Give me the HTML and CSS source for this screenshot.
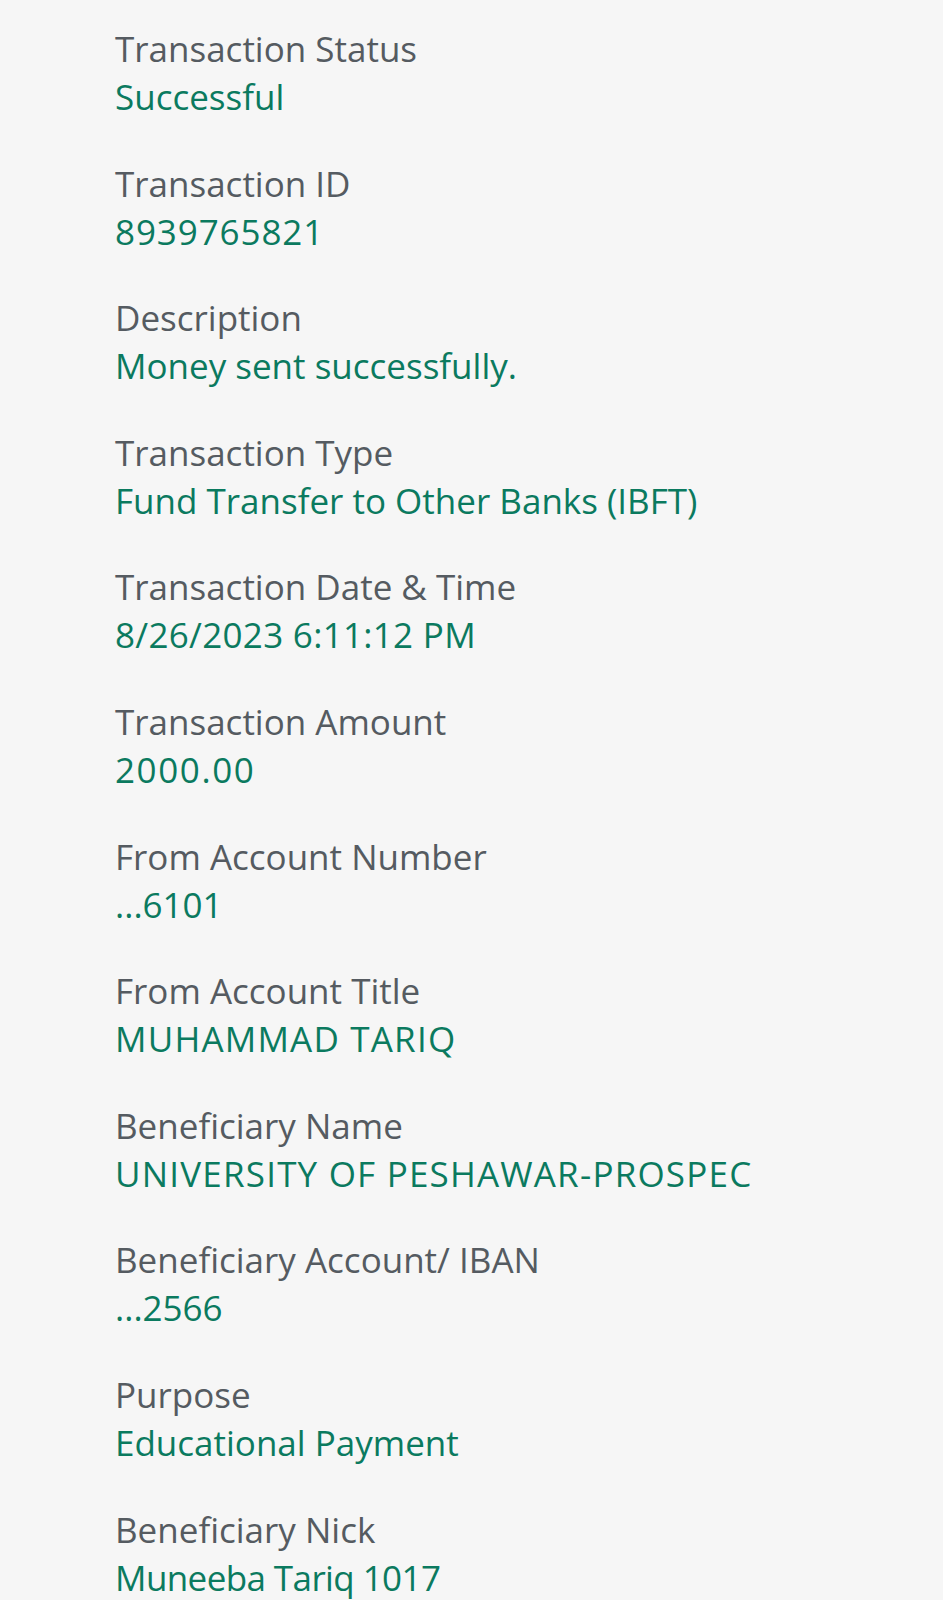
FILE: index.html
```html
<!DOCTYPE html>
<html>
<head>
<meta charset="utf-8">
<link rel="stylesheet" href="styles.css">
</head>
<body>
<div class="list">
  <div class="item"><div class="label">Transaction Status</div><div class="value">Successful</div></div>
  <div class="item"><div class="label">Transaction ID</div><div class="value wide">8939765821</div></div>
  <div class="item"><div class="label">Description</div><div class="value">Money sent successfully.</div></div>
  <div class="item"><div class="label">Transaction Type</div><div class="value">Fund Transfer to Other Banks (IBFT)</div></div>
  <div class="item"><div class="label">Transaction Date &amp; Time</div><div class="value date">8/26/2023 6:11:12 PM</div></div>
  <div class="item"><div class="label">Transaction Amount</div><div class="value amount">2000.00</div></div>
  <div class="item"><div class="label">From Account Number</div><div class="value">...6101</div></div>
  <div class="item"><div class="label">From Account Title</div><div class="value caps">MUHAMMAD TARIQ</div></div>
  <div class="item"><div class="label">Beneficiary Name</div><div class="value caps">UNIVERSITY OF PESHAWAR-PROSPEC</div></div>
  <div class="item"><div class="label">Beneficiary Account/ IBAN</div><div class="value">...2566</div></div>
  <div class="item"><div class="label">Purpose</div><div class="value">Educational Payment</div></div>
  <div class="item"><div class="label">Beneficiary Nick</div><div class="value nick">Muneeba Tariq 1017</div></div>
</div>
</body>
</html>
```
FILE: styles.css
```css
html, body {
  margin: 0;
  padding: 0;
  background: #f6f6f6;
}
body {
  font-family: "Open Sans", "Noto Sans", sans-serif;
  width: 943px;
  height: 1600px;
  overflow: hidden;
}
.list {
  display: flex;
  flex-direction: column;
  gap: 38.6px;
  padding: 25px 0 0 115px;
}
.label, .value {
  font-size: 35px;
  line-height: 48px;
  white-space: nowrap;
}
.label {
  color: #555b61;
}
.value {
  color: #0b7a5f;
}
.caps {
  letter-spacing: 1.2px;
}
.wide {
  letter-spacing: 0.9px;
}
.date {
  letter-spacing: 0.3px;
}
.amount {
  letter-spacing: 1.6px;
}
.nick {
  letter-spacing: -0.6px;
}
```
